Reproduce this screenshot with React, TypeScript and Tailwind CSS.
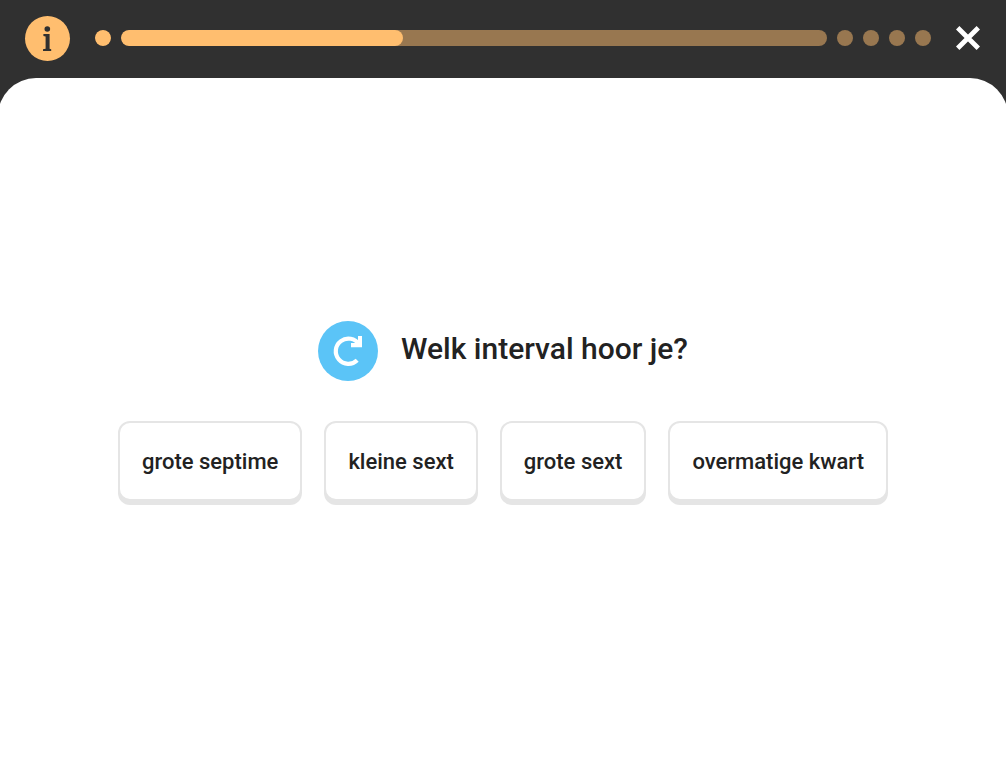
import { useState } from 'react';

const answers = ['grote septime', 'kleine sext', 'grote sext', 'overmatige kwart'];

const steps = [
  { id: 1, progress: 100, active: false },
  { id: 2, progress: 40, active: true },
  { id: 3, progress: 0, active: false },
  { id: 4, progress: 0, active: false },
  { id: 5, progress: 0, active: false },
  { id: 6, progress: 0, active: false },
];

function InfoIcon() {
  return (
    <svg viewBox="0 0 45 45" className="size-full" fill="#303030" aria-hidden="true">
      <circle cx="22.3" cy="13" r="2.8" />
      <path d="M18.4 18h6.2v14.8l1.6.4V35h-8.2v-1.8l2.6-.4V20.4l-2.2-.4z" />
    </svg>
  );
}

function CloseIcon() {
  return (
    <svg viewBox="0 0 24 24" className="size-6" stroke="#fff" strokeWidth="4.8" aria-hidden="true">
      <path d="M1.7 1.7L22.3 22.3M22.3 1.7L1.7 22.3" />
    </svg>
  );
}

function ReplayIcon() {
  return (
    <svg viewBox="0 0 60 60" className="size-full" fill="none" stroke="#fff" strokeWidth="4.2" aria-hidden="true">
      <path d="M39.2 39.2A12.6 12.6 0 1 1 41 23.4" />
      <path d="M44 15v11.2H33v-4.2h7V15z" fill="#fff" stroke="none" />
    </svg>
  );
}

function Progress() {
  return (
    <div className="flex flex-1 items-center gap-2.5">
      {steps.map((step) => (
        <div
          key={step.id}
          className={`h-4 overflow-hidden rounded-full bg-[#987750] ${step.active ? 'flex-1' : 'w-4'}`}
        >
          <div className="h-full rounded-full bg-[#ffbe6f]" style={{ width: `${step.progress}%` }} />
        </div>
      ))}
    </div>
  );
}

export default function App() {
  const [selected, setSelected] = useState<string | null>(null);

  return (
    <div className="flex min-h-screen flex-col overflow-hidden bg-[#303030] font-['Roboto',sans-serif] font-medium text-[#222222]">
      <header className="flex h-[78px] items-center gap-[25px] pr-[26px] pb-0.5 pl-[25px]">
        <button type="button" aria-label="Info" className="size-[45px] rounded-full bg-[#ffbe6f]">
          <InfoIcon />
        </button>
        <Progress />
        <button type="button" aria-label="Sluiten">
          <CloseIcon />
        </button>
      </header>

      <main className="-mx-0.5 flex flex-1 flex-col items-center justify-center gap-10 rounded-t-[38px] bg-white pb-[22px]">
        <div className="flex items-center gap-[23px]">
          <button type="button" aria-label="Opnieuw afspelen" className="size-[60px] rounded-full bg-[#5bc4f7]">
            <ReplayIcon />
          </button>
          <h1 className="pb-1 text-[30px] leading-10">Welk interval hoor je?</h1>
        </div>
        <div className="flex flex-wrap justify-center gap-[22px]">
          {answers.map((answer) => (
            <button
              key={answer}
              type="button"
              aria-pressed={selected === answer}
              onClick={() => setSelected(answer)}
              className="h-20 rounded-xl border-2 border-[#e5e5e5] bg-white px-[22px] pt-0.5 text-[22px] shadow-[0_4px_0_#e5e5e5]"
            >
              {answer}
            </button>
          ))}
        </div>
      </main>
    </div>
  );
}
